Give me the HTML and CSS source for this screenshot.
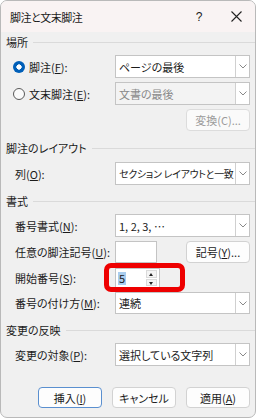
FILE: index.html
```html
<!DOCTYPE html>
<html lang="ja">
<head>
<meta charset="utf-8">
<link rel="stylesheet" href="styles.css">
</head>
<body>
<div class="dialog">
  <div class="titlebar">
    <span class="title">脚注と文末脚注</span>
    <span class="help">?</span>
    <span class="close"><svg width="11" height="11" viewBox="0 0 11 11"><path d="M0.5 0.5 L10.5 10.5 M10.5 0.5 L0.5 10.5" stroke="#222" stroke-width="1.1" fill="none"/></svg></span>
  </div>
  <div class="content">
    <div class="sec s1"><span>場所</span><i class="rule"></i></div>

    <div class="row rrow m4">
      <span class="radio on"></span><span class="rlbl">脚注(<u>F</u>):</span>
      <div class="select"><span class="val">ページの最後</span><span class="arrow"><svg width="8" height="5" viewBox="0 0 8 5"><path d="M0.5 0.5 L4 4 L7.5 0.5" stroke="#888" fill="none"/></svg></span></div>
    </div>
    <div class="row rrow m4">
      <span class="radio"></span><span class="rlbl">文末脚注(<u>E</u>):</span>
      <div class="select disabled"><span class="val">文書の最後</span><span class="arrow"><svg width="8" height="5" viewBox="0 0 8 5"><path d="M0.5 0.5 L4 4 L7.5 0.5" stroke="#888" fill="none"/></svg></span></div>
    </div>
    <div class="row end m4 h22">
      <button class="btn wide disabled">変換(C)...</button>
    </div>

    <div class="sec m8"><span>脚注のレイアウト</span><i class="rule"></i></div>
    <div class="row m5">
      <span class="lbl">列(<u>O</u>):</span>
      <div class="select"><span class="val tight">セクション レイアウトと一致</span><span class="arrow"><svg width="8" height="5" viewBox="0 0 8 5"><path d="M0.5 0.5 L4 4 L7.5 0.5" stroke="#888" fill="none"/></svg></span></div>
    </div>

    <div class="sec m7"><span>書式</span><i class="rule"></i></div>
    <div class="row m4">
      <span class="lbl">番号書式(<u>N</u>):</span>
      <div class="select"><span class="val">1, 2, 3, …</span><span class="arrow"><svg width="8" height="5" viewBox="0 0 8 5"><path d="M0.5 0.5 L4 4 L7.5 0.5" stroke="#888" fill="none"/></svg></span></div>
    </div>
    <div class="row m4 h22">
      <span class="lbl">任意の脚注記号(<u>U</u>):</span>
      <div class="textbox"></div>
      <button class="btn wide push">記号(<u>Y</u>)...</button>
    </div>
    <div class="row m4 h22 spinrow">
      <span class="lbl">開始番号(<u>S</u>):</span>
      <div class="spin"><span class="sel">5</span><span class="spinbtns"><span class="up"></span><span class="down"></span></span></div>
      <div class="highlight"></div>
    </div>
    <div class="row m3 h22">
      <span class="lbl">番号の付け方(<u>M</u>):</span>
      <div class="select"><span class="val">連続</span><span class="arrow"><svg width="8" height="5" viewBox="0 0 8 5"><path d="M0.5 0.5 L4 4 L7.5 0.5" stroke="#888" fill="none"/></svg></span></div>
    </div>

    <div class="sec m7"><span>変更の反映</span><i class="rule"></i></div>
    <div class="row m4">
      <span class="lbl">変更の対象(<u>P</u>):</span>
      <div class="select"><span class="val">選択している文字列</span><span class="arrow"><svg width="8" height="5" viewBox="0 0 8 5"><path d="M0.5 0.5 L4 4 L7.5 0.5" stroke="#888" fill="none"/></svg></span></div>
    </div>

    <div class="row end buttons">
      <button class="btn wide default">挿入(<u>I</u>)</button>
      <button class="btn wide">キャンセル</button>
      <button class="btn wide">適用(<u>A</u>)</button>
    </div>
  </div>
</div>
</body>
</html>
```

FILE: styles.css
```css
* { box-sizing: border-box; }
html, body { margin: 0; padding: 0; background: #ffffff; }
body {
  font-family: "Noto Sans CJK JP", "Noto Sans", sans-serif;
  font-size: 11px;
  font-feature-settings: "palt" 1;
  color: #1b1b1b;
}
.dialog {
  width: 256px;
  height: 418px;
  border: 1px solid #b9b9b9;
  border-radius: 7px;
  background: #f0f0f0;
  overflow: hidden;
  display: flex;
  flex-direction: column;
}
.titlebar {
  height: 31px;
  flex: none;
  background: #f9f3f3;
  display: flex;
  align-items: center;
  padding-left: 9px;
  font-size: 11px;
}
.title { flex: 1; letter-spacing: -0.5px; }
.help { width: 16px; text-align: center; font-size: 12px; margin-right: 24px; font-family: "Liberation Sans", sans-serif; }
.close { width: 11px; height: 11px; display: flex; margin-right: 13px; }
.content { display: flex; flex-direction: column; }
.sec {
  height: 18px;
  display: flex;
  align-items: center;
  padding-left: 5px;
  gap: 5px;
}
.s1 { margin-top: 1px; }
.rule { flex: 1; height: 1px; background: #dadada; }
.row {
  height: 23px;
  display: flex;
  align-items: center;
  padding-left: 14px;
  padding-right: 5px;
}
.h22 { height: 22px; }
.m3 { margin-top: 3px; }
.m4 { margin-top: 4px; }
.m5 { margin-top: 5px; }
.m7 { margin-top: 7px; }
.m8 { margin-top: 8px; }
.rrow { padding-left: 12px; }
.end { justify-content: flex-end; }
.lbl { width: 100px; white-space: nowrap; }
.rlbl { margin-left: 4px; white-space: nowrap; }
u { text-decoration: underline; text-underline-offset: 1px; }
.radio {
  width: 12px; height: 12px;
  border-radius: 50%;
  border: 1px solid #5a5a5a;
  background: #fbfbfb;
  flex: none;
}
.radio.on {
  border: none;
  background: radial-gradient(circle, #ffffff 0 2.4px, #005fb8 2.9px);
}
.select {
  margin-left: auto;
  width: 135px;
  height: 100%;
  border: 1px solid #c4c4c4;
  background: #ffffff;
  display: flex;
  align-items: stretch;
}
.select .val { flex: 1; min-width: 0; display: flex; align-items: center; padding-left: 3px; white-space: nowrap; overflow: hidden; }
.select .val.tight { font-size: 10px; letter-spacing: -0.3px; }
.select .arrow {
  width: 14px;
  flex: none;
  border-left: 1px solid #d0d0d0;
  display: flex; align-items: center; justify-content: center;
  background: #ffffff;
}
.select.disabled { background: #f3f3f3; }
.select.disabled .val { color: #8a8a8a; }
.btn {
  font: inherit;
  font-feature-settings: "palt" 1;
  height: 21px;
  background: #fdfdfd;
  border: 1px solid #d2d2d2;
  border-radius: 4px;
  color: #1b1b1b;
  padding: 0;
}
.h22 .btn { height: 22px; }
.btn.wide { width: 64px; }
.btn.disabled { color: #9a9a9a; background: #fafafa; border-color: #dcdcdc; }
.btn.default { border-color: #5a8fcf; }
.push { margin-left: auto; }
.textbox {
  width: 42px;
  height: 100%;
  background: #fff;
  border: 1px solid #c4c4c4;
}
.spinrow { position: relative; }
.spin {
  width: 45px;
  height: 20px;
  background: #fff;
  border: 1px solid #c4c4c4;
  display: flex;
  align-items: center;
  padding-left: 2px;
}
.sel { background: #a9cdef; padding: 0 1px; line-height: 13px; }
.spinbtns {
  margin-left: auto;
  margin-right: 2px;
  width: 11px;
  height: 16px;
  display: flex;
  flex-direction: column;
  gap: 1px;
}
.spinbtns span {
  flex: 1;
  background: #f4f4f4;
  border: 1px solid #dadada;
  position: relative;
}
.spinbtns .up::after, .spinbtns .down::after {
  content: "";
  position: absolute;
  left: 2px; top: 2px;
  border-left: 2.5px solid transparent;
  border-right: 2.5px solid transparent;
}
.spinbtns .up::after { border-bottom: 3px solid #222; }
.spinbtns .down::after { border-top: 3px solid #222; }
.highlight {
  position: absolute;
  left: 103px;
  top: -4px;
  width: 81px;
  height: 29px;
  border: 5px solid #ee0000;
  border-radius: 7px;
}
.buttons { margin-top: 21px; height: 21px; gap: 10px; }
```
